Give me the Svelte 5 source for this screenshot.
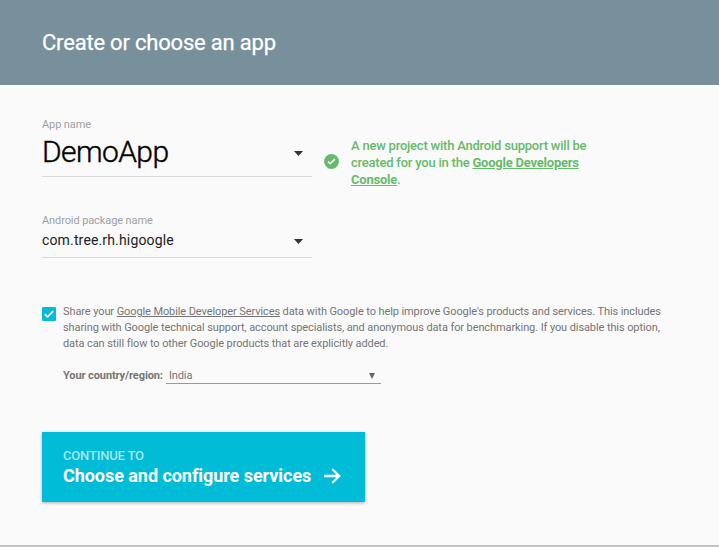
<script>
  let appName = 'DemoApp';
  let packageName = 'com.tree.rh.higoogle';
  let country = 'India';
</script>

<main class="card">
  <header><h1>Create or choose an app</h1></header>

  <div class="body">
    <div class="row">
      <div class="field">
        <label for="app">App name</label>
        <div class="value large" id="app">
          <span>{appName}</span>
          <svg width="9" height="5" viewBox="0 0 9 5"><path d="M0 0h9L4.5 5z" fill="#333" /></svg>
        </div>
      </div>
      <svg class="ok" width="15" height="15" viewBox="0 0 15 15">
        <circle cx="7.5" cy="7.5" r="7.4" fill="#66bb6a" />
        <path d="M4 7.6l2.2 2.1L11 5.1" fill="none" stroke="#fff" stroke-width="1.6" />
      </svg>
      <p class="notice">A new project with Android support will be<br />created for you in the <b>Google Developers</b><br /><b>Console</b>.</p>
    </div>

    <div class="field package">
      <label for="package">Android package name</label>
      <div class="value" id="package">
        <span>{packageName}</span>
        <svg width="9" height="5" viewBox="0 0 9 5"><path d="M0 0h9L4.5 5z" fill="#333" /></svg>
      </div>
    </div>

    <div class="share">
      <svg class="check" width="14" height="14" viewBox="0 0 14 14">
        <rect width="14" height="14" rx="1.3" fill="#00bcd7" />
        <path d="M2.8 7.2l2.8 2.7 5.6-5.7" fill="none" stroke="#fff" stroke-width="1.7" />
      </svg>
      <div>
        <p class="terms">Share your <u>Google Mobile Developer Services</u> data with Google to help improve Google's products and services. This includes<br />sharing with Google technical support, account specialists, and anonymous data for benchmarking. If you disable this option,<br />data can still flow to other Google products that are explicitly added.</p>
        <div class="region">
          <strong>Your country/region:</strong>
          <div class="select">
            <span>{country}</span>
            <svg width="6" height="6" viewBox="0 0 6 6"><path d="M0 0h6L3 6z" fill="#666" /></svg>
          </div>
        </div>
      </div>
    </div>

    <button>
      <small>CONTINUE TO</small>
      <span class="next">
        <span>Choose and configure services</span>
        <svg width="17" height="16" viewBox="0 0 17 16"><path d="M0 8h15M8.2 1l7 7-7 7" fill="none" stroke="#fff" stroke-width="2.3" /></svg>
      </span>
    </button>
  </div>
</main>

<style>
  :global(body) {
    margin: 0;
    background: #eee;
    overflow: hidden;
  }
  .card {
    box-sizing: border-box;
    width: 719px;
    height: 547px;
    background: #fafafa;
    border-bottom: 2px solid #c2c2c2;
    font-family: Roboto, sans-serif;
    color: #757575;
  }
  header {
    height: 85px;
    background: #78909c;
    display: flex;
    align-items: center;
    box-sizing: border-box;
    padding-left: 42px;
  }
  h1 {
    margin: 0;
    font-size: 22px;
    line-height: 28px;
    font-weight: 400;
    letter-spacing: -0.2px;
    color: #fff;
    -webkit-text-stroke: 0.25px #fff;
  }
  .body {
    padding: 32px 42px 0;
  }
  .row {
    display: flex;
    height: 60px;
  }
  .field {
    width: 270px;
    height: 60px;
    box-sizing: border-box;
    border-bottom: 1px solid #d9d9d9;
  }
  label {
    display: block;
    padding-top: 1px;
    font-size: 11px;
    line-height: 14px;
    letter-spacing: -0.1px;
    color: #a1a1a1;
  }
  .value {
    display: flex;
    align-items: center;
    justify-content: space-between;
    height: 23px;
    padding-right: 9px;
    font-size: 14px;
    letter-spacing: 0.15px;
    color: #212121;
  }
  .value svg {
    margin-top: 3px;
  }
  .value.large {
    height: 39px;
    font-size: 30px;
    font-weight: 300;
    letter-spacing: -0.6px;
    color: #000;
  }
  .value.large span {
    -webkit-text-stroke: 0.4px #000;
  }
  .ok {
    margin: 37px 12px 0;
  }
  .notice {
    margin: 20px 0 0;
    font-size: 13px;
    line-height: 17px;
    letter-spacing: -0.22px;
    color: #66bb6a;
    white-space: nowrap;
    font-weight: 500;
  }
  .notice b {
    font-weight: 700;
    text-decoration: underline;
  }
  .package {
    height: 45px;
    margin-top: 36px;
  }
  .share {
    display: flex;
    margin-top: 46px;
  }
  .check {
    margin: 3px 7px 0 0;
    flex: none;
  }
  .terms {
    margin: 0;
    font-size: 11px;
    line-height: 16px;
    letter-spacing: -0.095px;
    white-space: nowrap;
  }
  .region {
    display: flex;
    align-items: flex-start;
    height: 16px;
    margin-top: 16px;
    font-size: 11px;
    line-height: 16px;
    letter-spacing: -0.1px;
  }
  .select {
    display: flex;
    align-items: center;
    justify-content: space-between;
    box-sizing: border-box;
    width: 215px;
    height: 16px;
    margin-left: 3px;
    padding: 0 6px 0 3px;
    border-bottom: 1px solid #999;
  }
  .select svg {
    margin-top: 1px;
  }
  button {
    display: block;
    width: 323px;
    height: 70px;
    margin-top: 48px;
    padding: 0 21px 0;
    border: 0;
    background: #00bcd7;
    box-shadow: 0 1px 3px rgba(0, 0, 0, 0.3);
    color: #fff;
    font-family: inherit;
    text-align: left;
  }
  small {
    display: block;
    font-size: 13px;
    line-height: 17px;
    font-weight: 500;
    letter-spacing: -0.18px;
    color: #a6e6ef;
  }
  .next {
    display: flex;
    align-items: center;
    gap: 13px;
    font-size: 18px;
    line-height: 24px;
    font-weight: 700;
    letter-spacing: -0.05px;
    white-space: nowrap;
  }
</style>
